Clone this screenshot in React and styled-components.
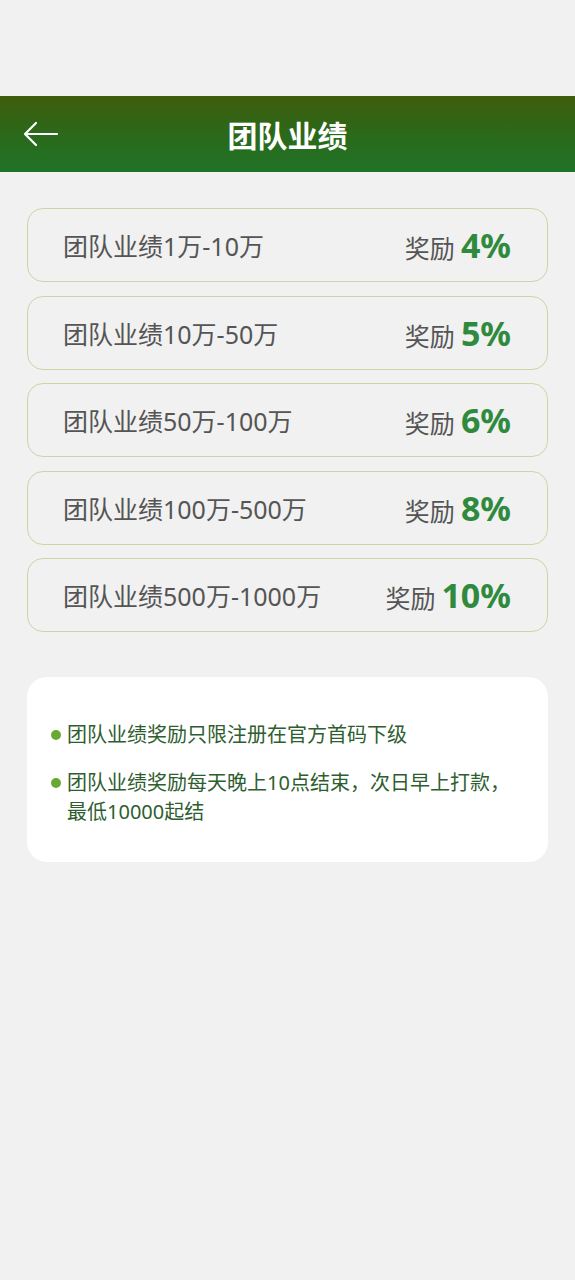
import React from "react";
import styled, { createGlobalStyle } from "styled-components";

const GlobalStyle = createGlobalStyle`
  html, body {
    margin: 0;
    padding: 0;
    background: #f1f1f1;
  }
  body {
    font-family: "Noto Sans", "Noto Sans CJK SC", sans-serif;
  }
`;

const TIERS = [
  { range: "团队业绩1万-10万", rate: "4%" },
  { range: "团队业绩10万-50万", rate: "5%" },
  { range: "团队业绩50万-100万", rate: "6%" },
  { range: "团队业绩100万-500万", rate: "8%" },
  { range: "团队业绩500万-1000万", rate: "10%" },
];

const NOTES = [
  "团队业绩奖励只限注册在官方首码下级",
  "团队业绩奖励每天晚上10点结束，次日早上打款，最低10000起结",
];

const Page = styled.div`
  min-height: 1280px;
  padding-top: 96px;
  box-sizing: border-box;
`;

const Header = styled.header`
  height: 76px;
  display: flex;
  align-items: center;
  justify-content: center;
  position: relative;
  background: linear-gradient(180deg, #3f5c0b 0%, #2a6a1c 55%, #1f7326 100%);
`;

const BackButton = styled.button`
  position: absolute;
  left: 22px;
  top: 50%;
  transform: translateY(-50%);
  width: 38px;
  height: 38px;
  padding: 0;
  border: none;
  background: transparent;
  display: flex;
  align-items: center;
  justify-content: center;
`;

const Title = styled.h1`
  margin: 0;
  color: #fff;
  font-size: 30px;
  font-weight: 700;
`;

const List = styled.div`
  display: flex;
  flex-direction: column;
  gap: 13.5px;
  padding: 36px 27px 0;
`;

const Card = styled.div`
  height: 74px;
  box-sizing: border-box;
  border: 1px solid #cbd5a6;
  border-radius: 16px;
  display: flex;
  align-items: center;
  justify-content: space-between;
  padding: 0 36px 0 35px;
`;

const Range = styled.span`
  font-size: 25px;
  color: #555;
`;

const Reward = styled.span`
  display: flex;
  align-items: baseline;
  gap: 6px;
  font-size: 25px;
  color: #555;
`;

const Rate = styled.span`
  font-size: 34px;
  font-weight: 700;
  color: #2f8a3e;
`;

const Notes = styled.ul`
  list-style: none;
  margin: 45px 27px 0;
  padding: 43px 24px 36px 24px;
  background: #fff;
  border-radius: 20px;
  display: flex;
  flex-direction: column;
  gap: 19px;
`;

const Note = styled.li`
  display: flex;
  gap: 6px;
  font-size: 20px;
  line-height: 29px;
  color: #2e5e2f;
`;

const Dot = styled.span`
  flex: none;
  width: 10px;
  height: 10px;
  margin-top: 10px;
  border-radius: 50%;
  background: #6aa832;
`;

export default function App() {
  return (
    <Page>
      <GlobalStyle />
      <Header>
        <BackButton aria-label="back">
          <svg width="36" height="26" viewBox="0 0 36 26" fill="none">
            <path
              d="M34 13H3M13 2L2 13l11 11"
              stroke="#fff"
              strokeWidth="2.2"
              strokeLinecap="round"
              strokeLinejoin="round"
            />
          </svg>
        </BackButton>
        <Title>团队业绩</Title>
      </Header>
      <List>
        {TIERS.map((t) => (
          <Card key={t.range}>
            <Range>{t.range}</Range>
            <Reward>
              奖励<Rate>{t.rate}</Rate>
            </Reward>
          </Card>
        ))}
      </List>
      <Notes>
        {NOTES.map((n) => (
          <Note key={n}>
            <Dot />
            <span>{n}</span>
          </Note>
        ))}
      </Notes>
    </Page>
  );
}
